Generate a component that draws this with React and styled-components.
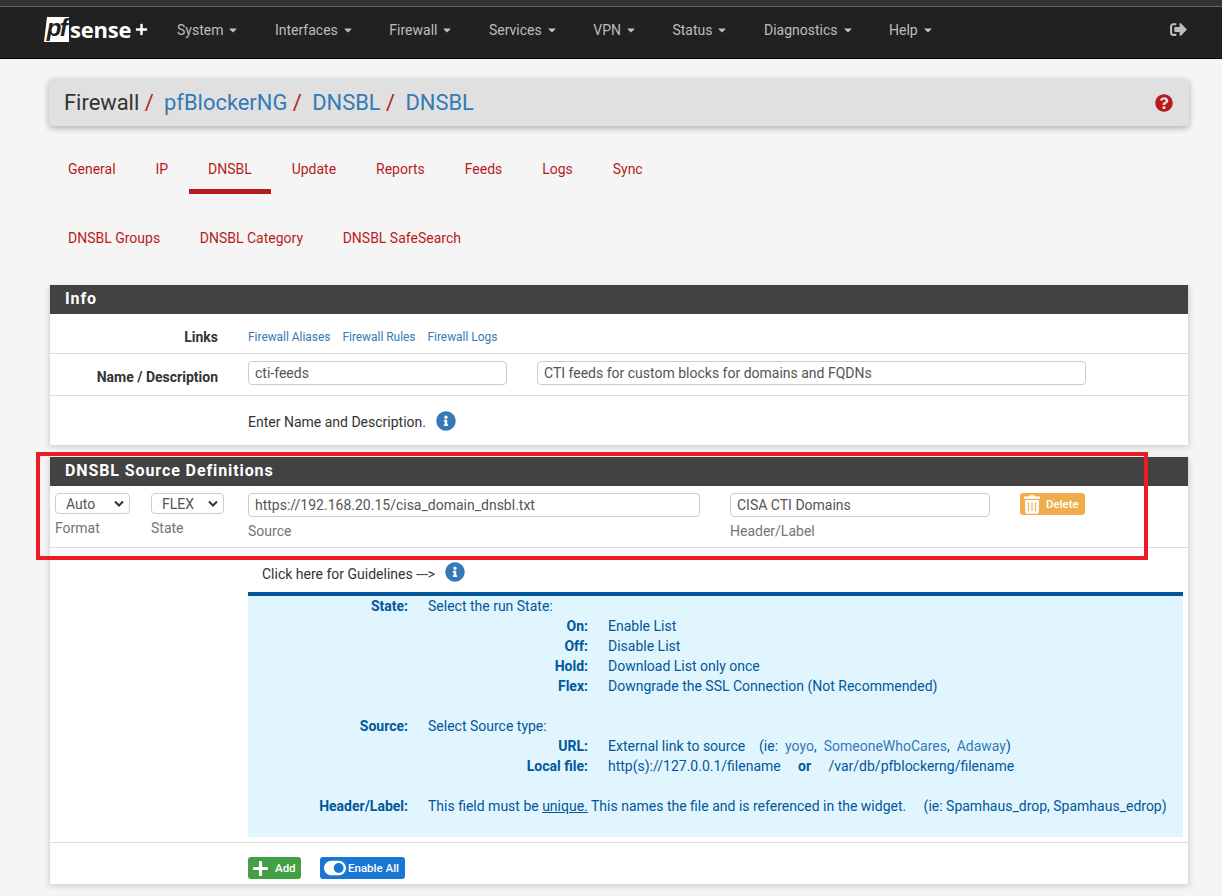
import React from 'react';
import styled, { createGlobalStyle } from 'styled-components';
import {
  FaCaretDown,
  FaInfoCircle,
  FaPlus,
  FaQuestionCircle,
  FaSignOutAlt,
  FaToggleOn,
  FaTrashAlt,
} from 'react-icons/fa';

const GlobalStyle = createGlobalStyle`
  html, body {
    margin: 0;
    padding: 0;
    height: 896px;
    overflow: hidden;
    background: #f5f5f5;
    font-family: Roboto, "Liberation Sans", sans-serif;
    font-size: 14px;
    color: #333;
  }
  * { box-sizing: border-box; }
`;

const TopStrip = styled.div`
  height: 7px;
  background: #333;
  border-bottom: 1px solid #666;
`;

const Navbar = styled.nav`
  height: 52px;
  background: #212121;
  border-bottom: 1px solid #000;
  display: flex;
  align-items: center;
  padding: 0 34px 6px 44px;
`;

const Brand = styled.div`
  width: 133px;
  display: flex;
  align-items: center;
  color: #fff;
`;

const LogoBox = styled.span`
  width: 25px;
  height: 25px;
  background: #fff;
  color: #212121;
  clip-path: polygon(12% 0, 100% 0, 100% 100%, 0 100%);
  font: italic 700 24px/22px "Liberation Sans", sans-serif;
  letter-spacing: -1.5px;
  text-align: center;
`;

const LogoWord = styled.span`
  font: 700 22px/25px "Open Sans", sans-serif;
  letter-spacing: -0.2px;
  margin-left: 1px;
`;

const LogoPlus = styled(FaPlus)`
  width: 13px;
  height: 13px;
  margin-left: 4px;
`;

const NavItem = styled.a`
  color: #bdbdbd;
  display: flex;
  align-items: center;
  gap: 4px;
  font-size: 14px;
  margin-right: 35.5px;
`;

const NavSpacer = styled.div`
  flex: 1;
`;

const Logout = styled(FaSignOutAlt)`
  width: 19px;
  height: 17px;
  color: #bdbdbd;
`;

const Page = styled.main`
  padding: 20px 33px 0 49px;
`;

const Breadcrumb = styled.div`
  height: 47px;
  background: #e0e0e0;
  border-radius: 3px;
  box-shadow: 0 2px 6px rgba(0, 0, 0, 0.3);
  display: flex;
  align-items: center;
  justify-content: space-between;
  padding: 0 16px 0 15px;
`;

const Crumbs = styled.h1`
  margin: 0;
  font-size: 21.9px;
  font-weight: 400;
  color: #333;
  display: flex;
  white-space: pre;
`;

const CrumbLink = styled.a`
  color: #337ab7;
`;

const Slash = styled.span`
  color: #b71c1c;
  margin-right: -0.5px;
`;

const HelpIcon = styled(FaQuestionCircle)`
  width: 18px;
  height: 18px;
  color: #b71c1c;
`;

const Tabs = styled.div`
  display: flex;
  height: ${(p) => p.$height}px;
  padding-top: ${(p) => p.$top}px;
`;

const Tab = styled.a`
  height: 51px;
  padding: 17px 19px 0;
  margin-right: ${(p) => p.$gap}px;
  color: #b71c1c;
  font-size: 14px;
  line-height: 18px;
  border-bottom: 5px solid ${(p) => (p.$active ? '#b71c1c' : 'transparent')};
`;

const Panel = styled.section`
  background: #fff;
  border-left: 1px solid #ddd;
  border-right: 1px solid #ddd;
  box-shadow: 0 2px 6px rgba(0, 0, 0, 0.16);
  margin-bottom: 12px;
  position: relative;
`;

const PanelHeading = styled.h2`
  margin: 0;
  height: 29px;
  background: #424242;
  color: #fff;
  font-size: 16px;
  font-weight: 700;
  letter-spacing: 0.9px;
  line-height: 27px;
  padding-left: 15px;
`;

const Row = styled.div`
  display: grid;
  grid-template-columns: 168px 1fr;
  column-gap: 30px;
  height: ${(p) => p.$height}px;
  padding-top: ${(p) => p.$pad || 0}px;
  align-items: ${(p) => p.$align || 'center'};
  border-bottom: ${(p) => (p.$plain ? 'none' : '1px solid #ddd')};
`;

const RowLabel = styled.div`
  font-weight: 700;
  text-align: right;
  color: #333;
  padding-top: ${(p) => p.$pad || 0}px;
`;

const RowValue = styled.div`
  display: flex;
  align-items: center;
`;

const SmallLink = styled.a`
  color: #337ab7;
  font-size: 11.9px;
  margin-right: 12px;
`;

const TextField = styled.div`
  width: ${(p) => p.$width}px;
  height: 24px;
  border: 1px solid #ccc;
  border-radius: 4px;
  background: #fff;
  color: #555;
  font-size: 14px;
  line-height: 22px;
  padding: 0 6px;
  white-space: nowrap;
  overflow: hidden;
`;

const NamedField = styled(TextField)`
  margin-right: 30px;
`;

const HintText = styled.span`
  color: #333;
  padding-top: 2px;
`;

const InfoIcon = styled(FaInfoCircle)`
  width: 20px;
  height: 20px;
  color: #337ab7;
  margin-left: ${(p) => p.$gap}px;
`;

const SourceRow = styled.div`
  height: 62px;
  border-bottom: 1px solid #ddd;
  display: flex;
  padding: 7px 0 0 5px;
`;

const Field = styled.div`
  width: ${(p) => p.$width}px;
  flex: none;
`;

const FieldLabel = styled.div`
  color: #757575;
  font-size: 14px;
  line-height: 18px;
  margin-top: 5px;
`;

const SelectBox = styled.div`
  width: ${(p) => p.$width}px;
  height: 21px;
  border: 1px solid #ccc;
  border-radius: 4px;
  display: flex;
  align-items: center;
  justify-content: space-between;
  padding: 0 0 0 ${(p) => p.$pad}px;
  color: #555;
`;

const Chevron = styled.svg`
  width: 10px;
  height: 7px;
  margin-right: 5px;
`;

const DeleteButton = styled.a`
  width: 65px;
  height: 22px;
  background: #f0ad4e;
  border-radius: 3px;
  color: #fff;
  font-size: 11.5px;
  font-weight: 500;
  display: flex;
  align-items: center;
  padding-left: 4px;
  gap: 6px;

  svg {
    width: 16px;
    height: 19px;
  }
`;

const GuideRow = styled.div`
  height: 295px;
  border-bottom: 1px solid #ddd;
  padding: 14px 5px 0 198px;
`;

const GuideToggle = styled.div`
  height: 30px;
  padding-left: 14px;
  display: flex;
  align-items: flex-start;
  color: #333;
  line-height: 24px;
`;

const HelpBlock = styled.div`
  background: #e1f5fe;
  border-top: 4px solid #01579b;
  color: #01579b;
  height: 245px;
  display: grid;
  grid-template-columns: 160px 160px 1fr;
  column-gap: 20px;
  grid-auto-rows: 20px;
  line-height: 20px;
  white-space: pre;
`;

const HelpKey = styled.strong`
  text-align: right;
  font-weight: 700;
  grid-column: ${(p) => p.$col};
`;

const HelpText = styled.span`
  grid-column: ${(p) => p.$col};
`;

const HelpBlank = styled.div`
  grid-column: 1 / -1;
`;

const HelpLink = styled.a`
  color: #337ab7;
`;

const ActionRow = styled.div`
  height: 41px;
  padding: 14px 0 0 198px;
  display: flex;
  gap: 19px;
`;

const ActionButton = styled.a`
  height: 22px;
  width: ${(p) => p.$width}px;
  background: ${(p) => p.$bg};
  border-radius: 3px;
  color: #fff;
  font-size: 11.5px;
  font-weight: 500;
  display: flex;
  align-items: center;
  gap: ${(p) => p.$gap}px;
  padding-left: 4px;
`;

const PlusIcon = styled(FaPlus)`
  width: 17px;
  height: 17px;
`;

const ToggleIcon = styled(FaToggleOn)`
  width: 22px;
  height: 20px;
`;

const Annotation = styled.div`
  position: absolute;
  left: -14px;
  top: -5px;
  width: 1112px;
  height: 108px;
  border: 4px solid #ed1c24;
  pointer-events: none;
`;

const NextPanel = styled.div`
  height: 1px;
  background: #ddd;
`;

const navItems = ['System', 'Interfaces', 'Firewall', 'Services', 'VPN', 'Status', 'Diagnostics', 'Help'];
const mainTabs = ['General', 'IP', 'DNSBL', 'Update', 'Reports', 'Feeds', 'Logs', 'Sync'];
const subTabs = ['DNSBL Groups', 'DNSBL Category', 'DNSBL SafeSearch'];

const Caret = () => (
  <Chevron viewBox="0 0 10 7">
    <path d="M1 1.5 L5 5.5 L9 1.5" fill="none" stroke="#333" strokeWidth="2" />
  </Chevron>
);

const App = () => {
  return (
    <>
      <GlobalStyle />
      <TopStrip />
      <Navbar>
        <Brand>
          <LogoBox>pf</LogoBox>
          <LogoWord>sense</LogoWord>
          <LogoPlus />
        </Brand>
        {navItems.map((item) => (
          <NavItem key={item}>
            {item}
            <FaCaretDown size={12} />
          </NavItem>
        ))}
        <NavSpacer />
        <Logout />
      </Navbar>

      <Page>
        <Breadcrumb>
          <Crumbs>
            Firewall<Slash> /  </Slash>
            <CrumbLink>pfBlockerNG</CrumbLink><Slash> /  </Slash>
            <CrumbLink>DNSBL</CrumbLink><Slash> /  </Slash>
            <CrumbLink>DNSBL</CrumbLink>
          </Crumbs>
          <HelpIcon />
        </Breadcrumb>

        <Tabs $height={82} $top={17}>
          {mainTabs.map((tab) => (
            <Tab key={tab} $gap={1.9} $active={tab === 'DNSBL'}>{tab}</Tab>
          ))}
        </Tabs>
        <Tabs $height={77} $top={4}>
          {subTabs.map((tab) => (
            <Tab key={tab} $gap={1.6}>{tab}</Tab>
          ))}
        </Tabs>

        <Panel>
          <PanelHeading>Info</PanelHeading>
          <Row $height={40} $pad={6}>
            <RowLabel>Links</RowLabel>
            <RowValue>
              <SmallLink>Firewall Aliases</SmallLink>
              <SmallLink>Firewall Rules</SmallLink>
              <SmallLink>Firewall Logs</SmallLink>
            </RowValue>
          </Row>
          <Row $height={42} $pad={7} $align="start">
            <RowLabel $pad={8}>Name / Description</RowLabel>
            <RowValue>
              <NamedField $width={259}>cti-feeds</NamedField>
              <TextField $width={549}>CTI feeds for custom blocks for domains and FQDNs</TextField>
            </RowValue>
          </Row>
          <Row $height={49} $plain>
            <div />
            <RowValue>
              <HintText>Enter Name and Description.</HintText>
              <InfoIcon $gap={10} />
            </RowValue>
          </Row>
        </Panel>

        <Panel>
          <PanelHeading>DNSBL Source Definitions</PanelHeading>
          <SourceRow>
            <Field $width={96}>
              <SelectBox $width={75} $pad={10}>Auto<Caret /></SelectBox>
              <FieldLabel>Format</FieldLabel>
            </Field>
            <Field $width={97}>
              <SelectBox $width={73} $pad={10}>FLEX<Caret /></SelectBox>
              <FieldLabel>State</FieldLabel>
            </Field>
            <Field $width={482}>
              <TextField $width={452}>https://192.168.20.15/cisa_domain_dnsbl.txt</TextField>
              <FieldLabel>Source</FieldLabel>
            </Field>
            <Field $width={290}>
              <TextField $width={260}>CISA CTI Domains</TextField>
              <FieldLabel>Header/Label</FieldLabel>
            </Field>
            <DeleteButton><FaTrashAlt />Delete</DeleteButton>
          </SourceRow>

          <GuideRow>
            <GuideToggle>
              <span>Click here for Guidelines ---&gt;</span>
              <InfoIcon $gap={10} />
            </GuideToggle>
            <HelpBlock>
              <HelpKey $col="1">State:</HelpKey>
              <HelpText $col="2 / 4">Select the run State:</HelpText>
              <HelpKey $col="2">On:</HelpKey>
              <HelpText $col="3">Enable List</HelpText>
              <HelpKey $col="2">Off:</HelpKey>
              <HelpText $col="3">Disable List</HelpText>
              <HelpKey $col="2">Hold:</HelpKey>
              <HelpText $col="3">Download List only once</HelpText>
              <HelpKey $col="2">Flex:</HelpKey>
              <HelpText $col="3">Downgrade the SSL Connection (Not Recommended)</HelpText>
              <HelpBlank />
              <HelpKey $col="1">Source:</HelpKey>
              <HelpText $col="2 / 4">Select Source type:</HelpText>
              <HelpKey $col="2">URL:</HelpKey>
              <HelpText $col="3">
                External link to source{'    '}(ie:{'  '}<HelpLink>yoyo</HelpLink>,{'  '}
                <HelpLink>SomeoneWhoCares</HelpLink>,{'  '}<HelpLink>Adaway</HelpLink>)
              </HelpText>
              <HelpKey $col="2">Local file:</HelpKey>
              <HelpText $col="3">
                http(s)://127.0.0.1/filename{'     '}<strong>or</strong>{'     '}/var/db/pfblockerng/filename
              </HelpText>
              <HelpBlank />
              <HelpKey $col="1">Header/Label:</HelpKey>
              <HelpText $col="2 / 4">
                This field must be <u>unique.</u> This names the file and is referenced in the widget.{'     '}(ie: Spamhaus_drop, Spamhaus_edrop)
              </HelpText>
            </HelpBlock>
          </GuideRow>

          <ActionRow>
            <ActionButton $width={53} $bg="#43a047" $gap={6}><PlusIcon />Add</ActionButton>
            <ActionButton $width={85} $bg="#1976d2" $gap={2}><ToggleIcon />Enable All</ActionButton>
          </ActionRow>
          <Annotation />
        </Panel>
        <NextPanel />
      </Page>
    </>
  );
};

export default App;
